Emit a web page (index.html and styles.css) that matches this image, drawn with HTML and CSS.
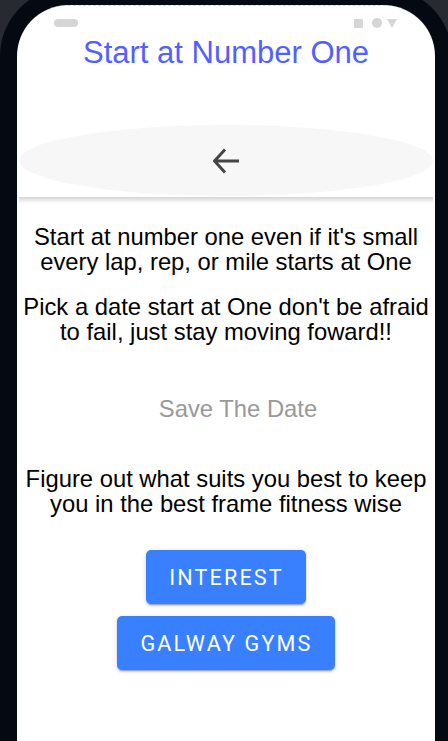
FILE: index.html
```html
<!DOCTYPE html>
<html lang="en">
<head>
<meta charset="utf-8">
<title>Start at Number One</title>
<link rel="stylesheet" href="styles.css">
</head>
<body>
<div class="phone">
  <div class="screen">
    <div class="statusbar">
      <span class="pill"></span>
      <span class="sys">
        <span class="sq"></span>
        <span class="dot"></span>
        <span class="tri"></span>
      </span>
    </div>
    <h1 class="title">Start at Number One</h1>
    <div class="toolbar">
      <div class="back">
        <svg class="arrow" width="26" height="26" viewBox="0 0 26 26" aria-hidden="true">
          <path d="M1.5 13H26M12 1.5L1.5 13L12 24.5" fill="none" stroke="#444" stroke-width="3"/>
        </svg>
      </div>
    </div>
    <div class="toolbar-shadow"></div>
    <div class="content">
      <p class="txt p1">Start at number one even if it's small every lap, rep, or mile starts at One</p>
      <p class="txt p2">Pick a date start at One don't be afraid to fail, just stay moving foward!!</p>
      <p class="txt save">Save The Date</p>
      <p class="txt p3">Figure out what suits you best to keep you in the best frame fitness wise</p>
      <div class="buttons">
        <button class="btn">Interest</button>
        <button class="btn">Galway Gyms</button>
      </div>
    </div>
  </div>
</div>
</body>
</html>
```

FILE: styles.css
```css
html, body {
  margin: 0;
  padding: 0;
  height: 741px;
  overflow: hidden;
  background: #272b31;
}
.phone {
  box-sizing: border-box;
  width: 452px;
  height: 753px;
  margin-top: -12px;
  border: 17px solid #040912;
  border-bottom: 0;
  border-radius: 68px 68px 0 0;
  background: #040912;
}
.screen {
  box-sizing: border-box;
  height: 100%;
  background: #fff;
  border-radius: 51px 51px 0 0;
  border-top: 1px dashed #dcdcdc;
  overflow: hidden;
}
.statusbar {
  display: flex;
  justify-content: space-between;
  align-items: center;
  height: 10px;
  padding: 12px 38px 0 37px;
}
.pill {
  width: 24px;
  height: 8px;
  border-radius: 4px;
  background: #d6d6d6;
}
.sys {
  display: flex;
  align-items: center;
}
.sq {
  width: 9px;
  height: 9px;
  margin-right: 9px;
  background: #d6d6d6;
  border-radius: 1px;
}
.dot {
  width: 10px;
  height: 10px;
  margin-right: 5px;
  border-radius: 50%;
  background: #d6d6d6;
}
.tri {
  width: 0;
  height: 0;
  border-left: 5px solid transparent;
  border-right: 5px solid transparent;
  border-top: 9px solid #d6d6d6;
}
.title {
  margin: 7px 0 0;
  font-family: "Liberation Sans", Arial, sans-serif;
  font-weight: 400;
  font-size: 31px;
  line-height: 36px;
  color: #5260ff;
  text-align: center;
}
.toolbar {
  padding: 54px 2px 1px;
}
.back {
  height: 71px;
  border-radius: 50%;
  background: #f7f7f7;
  display: flex;
  align-items: center;
  justify-content: center;
}
.arrow {
  display: block;
}
.toolbar-shadow {
  height: 8px;
  margin: 0 2px;
  background: linear-gradient(rgba(0,0,0,0.17), rgba(0,0,0,0.02) 70%, rgba(0,0,0,0));
}
.content {
  padding: 19px 4px 0;
  text-align: center;
  font-family: "Liberation Sans", Arial, sans-serif;
}
.txt {
  margin: 0;
  font-size: 23.8px;
  line-height: 25px;
  color: #000;
}
.p2 { margin-top: 20px; }
.save { margin: 52px 0 0 24px; color: #999; }
.p3 { margin-top: 45px; }
.buttons {
  margin-top: 34px;
  display: flex;
  flex-direction: column;
  align-items: center;
  gap: 12px;
}
.btn {
  height: 54px;
  padding: 0 22px 0 23px;
  border: none;
  border-radius: 5px;
  background: #3880ff;
  color: #fff;
  font-family: Roboto, "Noto Sans", sans-serif;
  font-weight: 400;
  font-size: 21.6px;
  letter-spacing: 0.1em;
  text-transform: uppercase;
  box-shadow: 0 3px 1px -2px rgba(0,0,0,0.2), 0 2px 2px 0 rgba(0,0,0,0.14), 0 1px 5px 0 rgba(0,0,0,0.12);
}
```
